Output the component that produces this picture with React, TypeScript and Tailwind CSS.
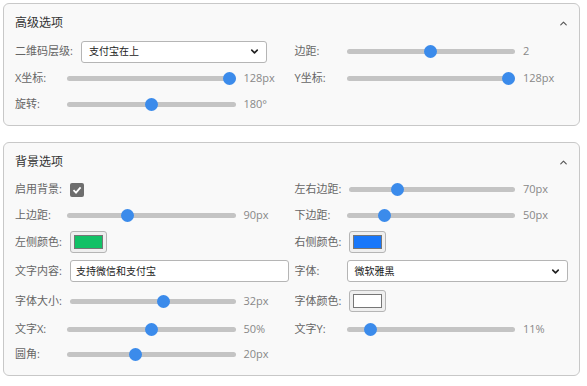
import { ChevronDown, ChevronUp } from "lucide-react";
import type { ReactNode } from "react";

const font = { fontFamily: '"Open Sans", "Noto Sans CJK SC", sans-serif' };

function Label({ children }: { children: ReactNode }) {
  return (
    <span className="min-w-[44px] mr-[8px] text-[11px] text-[#666] whitespace-nowrap">
      {children}
    </span>
  );
}

function Slider({ frac, value }: { frac: number; value: string }) {
  return (
    <>
      <div className="relative flex-1 h-[13px] flex items-center">
        <div className="w-full h-[5px] rounded-full bg-[#c4c4c4]" />
        <div
          className="absolute top-0 w-[13px] h-[13px] rounded-full bg-[#3b8beb]"
          style={{ left: `calc(${frac * 100}% - ${frac * 13}px)` }}
        />
      </div>
      <span className="w-[53px] pl-[8px] text-[11px] text-[#888]">{value}</span>
    </>
  );
}

function Swatch({ color }: { color: string }) {
  return (
    <div className="w-[37px] h-[22px] rounded-[3px] border border-[#b5b5b5] bg-[#efefef] p-[3px]">
      <div className="w-full h-full border border-[#767676]" style={{ background: color }} />
    </div>
  );
}

function Select({ text, className }: { text: string; className: string }) {
  return (
    <div
      className={`h-[22px] rounded-[3px] border border-[#b5b5b5] bg-white flex items-center justify-between pl-[7px] pr-[6px] ${className}`}
    >
      <span className="text-[10px] text-[#222]">{text}</span>
      <ChevronDown size={11} strokeWidth={3.5} className="text-[#222]" />
    </div>
  );
}

function Row({ h, children }: { h: string; children: ReactNode }) {
  return <div className={`flex items-center ${h}`}>{children}</div>;
}

function Panel({ title, children }: { title: string; children: ReactNode }) {
  return (
    <div className="border border-[#c8c8c8] rounded-[6px] bg-[#f9f9f9] px-[11px] pt-[9px] pb-[8px]">
      <div className="flex items-center justify-between h-[20px] mb-[5px]">
        <span className="text-[12px] text-[#333]">{title}</span>
        <ChevronUp size={11} strokeWidth={2.5} className="text-[#555] mr-[-1px]" />
      </div>
      {children}
    </div>
  );
}

export default function App() {
  return (
    <div className="bg-white w-[587px] h-[386px] p-[3px] pr-[7px]" style={font}>
      <Panel title="高级选项">
        <div className="grid grid-cols-2 gap-x-[6px]">
          <Row h="h-[27px]">
            <Label>二维码层级:</Label>
            <Select text="支付宝在上" className="w-[186px]" />
          </Row>
          <Row h="h-[27px]">
            <Label>边距:</Label>
            <Slider frac={0.5} value="2" />
          </Row>
          <Row h="h-[26px]">
            <Label>X坐标:</Label>
            <Slider frac={1} value="128px" />
          </Row>
          <Row h="h-[26px]">
            <Label>Y坐标:</Label>
            <Slider frac={1} value="128px" />
          </Row>
          <Row h="h-[26px]">
            <Label>旋转:</Label>
            <Slider frac={0.5} value="180°" />
          </Row>
        </div>
      </Panel>

      <div className="h-[16px]" />

      <Panel title="背景选项">
        <div className="grid grid-cols-2 gap-x-[6px]">
          <Row h="h-[25px]">
            <Label>启用背景:</Label>
            <div className="w-[14px] h-[14px] rounded-[2px] bg-[#6e6e6e] flex items-center justify-center">
              <svg width="10" height="10" viewBox="0 0 10 10">
                <path d="M1.5 5.2 L4 7.6 L8.6 2.4" fill="none" stroke="white" strokeWidth="1.8" />
              </svg>
            </div>
          </Row>
          <Row h="h-[25px]">
            <Label>左右边距:</Label>
            <Slider frac={0.27} value="70px" />
          </Row>
          <Row h="h-[26px]">
            <Label>上边距:</Label>
            <Slider frac={0.35} value="90px" />
          </Row>
          <Row h="h-[26px]">
            <Label>下边距:</Label>
            <Slider frac={0.2} value="50px" />
          </Row>
          <Row h="h-[28px]">
            <Label>左侧颜色:</Label>
            <Swatch color="#12c166" />
          </Row>
          <Row h="h-[28px]">
            <Label>右侧颜色:</Label>
            <Swatch color="#1877fa" />
          </Row>
          <Row h="h-[30px]">
            <Label>文字内容:</Label>
            <div className="flex-1 h-[22px] rounded-[3px] border border-[#b5b5b5] bg-white flex items-center px-[5px]">
              <span className="text-[10px] text-[#222]">支持微信和支付宝</span>
            </div>
          </Row>
          <Row h="h-[30px]">
            <Label>字体:</Label>
            <Select text="微软雅黑" className="flex-1" />
          </Row>
          <Row h="h-[30px]">
            <Label>字体大小:</Label>
            <Slider frac={0.57} value="32px" />
          </Row>
          <Row h="h-[30px]">
            <Label>字体颜色:</Label>
            <Swatch color="#ffffff" />
          </Row>
          <Row h="h-[26px]">
            <Label>文字X:</Label>
            <Slider frac={0.5} value="50%" />
          </Row>
          <Row h="h-[26px]">
            <Label>文字Y:</Label>
            <Slider frac={0.11} value="11%" />
          </Row>
          <Row h="h-[25px]">
            <Label>圆角:</Label>
            <Slider frac={0.4} value="20px" />
          </Row>
          <Row h="h-[25px]">
            <span />
          </Row>
        </div>
      </Panel>
    </div>
  );
}
